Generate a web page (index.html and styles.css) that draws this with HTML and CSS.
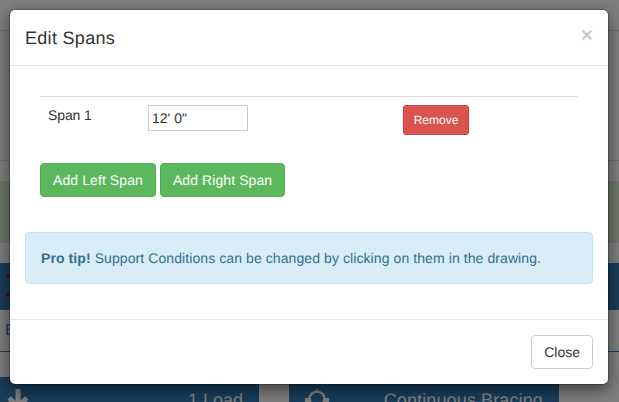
FILE: index.html
```html
<!DOCTYPE html>
<html lang="en">
<head>
<meta charset="utf-8">
<title>Edit Spans</title>
<link rel="stylesheet" href="styles.css">
</head>
<body>
<div class="page">
  <div class="page-top"></div>
  <div class="page-green"></div>
  <div class="page-bar">
    <i class="dash"></i>
    <i class="dash"></i>
  </div>
  <div class="page-tab"><span>B</span></div>
  <div class="page-tiles">
    <div class="tile tile-load">
      <svg class="tile-icon" width="24" height="20" viewBox="0 0 24 20"><path d="M12 0v18M3 9l9 8 9-8" fill="none" stroke="#fff" stroke-width="5"/></svg>
      <span>1 Load</span>
    </div>
    <div class="tile tile-brace">
      <svg class="tile-icon" width="24" height="20" viewBox="0 0 24 20"><circle cx="12" cy="10" r="7.5" fill="none" stroke="#fff" stroke-width="2.5"/><path d="M12 0l3.5 4h-7z" fill="#fff"/><rect x="0" y="9" width="6" height="9" fill="#fff"/><rect x="18" y="9" width="6" height="9" fill="#fff"/></svg>
      <span>Continuous Bracing</span>
    </div>
  </div>
</div>
<div class="backdrop"></div>
<div class="modal">
  <header class="modal-header">
    <h4 class="modal-title">Edit Spans</h4>
    <span class="modal-close">×</span>
  </header>
  <div class="modal-body">
    <div class="span-row">
      <span class="span-label">Span 1</span>
      <input class="span-input" type="text" value="12' 0&quot;">
      <button class="btn btn-danger" type="button">Remove</button>
    </div>
    <div class="span-actions">
      <button class="btn btn-success" type="button">Add Left Span</button>
      <button class="btn btn-success" type="button">Add Right Span</button>
    </div>
    <div class="alert"><strong>Pro tip!</strong> Support Conditions can be changed by clicking on them in the drawing.</div>
  </div>
  <footer class="modal-footer">
    <button class="btn btn-default" type="button">Close</button>
  </footer>
</div>
</body>
</html>
```
FILE: styles.css
```css
* { box-sizing: border-box; }
html, body { margin: 0; height: 100%; overflow: hidden; }
body {
  position: relative;
  background: #fff;
  font-family: "Liberation Sans", Arial, sans-serif;
  font-size: 14px;
  line-height: 20px;
  color: #333;
  text-rendering: geometricPrecision;
}
.page { width: 619px; height: 402px; overflow: hidden; }
.page-top { height: 131px; margin-top: 30px; border-top: 1px solid #ddd; border-bottom: 1px solid #ddd; }
.page-green { height: 62px; margin-top: 20px; background: #dff0d8; }
.page-bar {
  height: 47px;
  margin-top: 20px;
  padding: 12px 6px;
  background: #337ab7;
  display: flex;
  flex-direction: column;
  gap: 15px;
}
.dash { display: block; width: 5px; height: 3px; background: #d00010; }
.page-tab { height: 42px; border-bottom: 1px solid #337ab7; padding: 11px 5px; color: #337ab7; font-size: 16px; }
.page-tiles { display: flex; gap: 30px; margin-top: 25px; }
.tile {
  height: 40px;
  background: #337ab7;
  color: #fff;
  font-size: 18px;
  display: flex;
  justify-content: space-between;
  padding: 13px 16px 0 6px;
}
.tile-load { width: 259px; }
.tile-brace { width: 270px; padding-left: 16px; letter-spacing: .12px; }
.tile-icon { flex: none; margin-top: -1px; }
.backdrop { position: absolute; inset: 0; background: rgba(0, 0, 0, .5); }
.modal {
  position: absolute;
  left: 9px;
  top: 9px;
  width: 600px;
  height: 376px;
  background: #fff;
  background-clip: padding-box;
  border: 1px solid rgba(0, 0, 0, .2);
  border-radius: 6px;
  box-shadow: 0 5px 15px rgba(0, 0, 0, .5);
  display: flex;
  flex-direction: column;
}
.modal-header {
  display: flex;
  justify-content: space-between;
  align-items: flex-start;
  padding: 16px 15px 14px;
  border-bottom: 1px solid #e5e5e5;
}
.modal-title { margin: 0; font-size: 18px; font-weight: 500; line-height: 25px; letter-spacing: .3px; color: #333; }
.modal-close { font-size: 21px; font-weight: 700; line-height: 21px; color: #000; opacity: .2; margin-top: -1px; }
.modal-body { flex: 1; padding: 30px 15px 0; }
.span-row {
  display: grid;
  grid-template-columns: 100px 255px auto;
  justify-content: start;
  align-items: start;
  margin: 0 15px 20px;
  padding: 8px;
  border-top: 1px solid #ddd;
}
.span-label { letter-spacing: -.1px; }
.span-input {
  width: 100px;
  height: 26px;
  padding: 1px 3px;
  border: 1px solid #ccc;
  font: 14px "Liberation Sans", Arial, sans-serif;
  color: #333;
  text-rendering: geometricPrecision;
}
.btn {
  display: inline-block;
  height: 34px;
  padding: 6px 12px;
  border: 1px solid transparent;
  border-radius: 4px;
  font: 14px/20px "Liberation Sans", Arial, sans-serif;
  text-rendering: geometricPrecision;
}
.btn-danger {
  width: 66px;
  height: 30px;
  padding: 5px 0;
  font-size: 12px;
  line-height: 18px;
  border-radius: 3px;
  background: #d9534f;
  border-color: #d43f3a;
  color: #fff;
}
.span-actions { display: flex; gap: 4px; margin: 0 15px 35px; }
.btn-success { background: #5cb85c; border-color: #4cae4c; color: #fff; letter-spacing: .09px; }
.btn-default { background: #fff; border-color: #ccc; color: #333; }
.alert {
  height: 52px;
  padding: 15px;
  background: #d9edf7;
  border: 1px solid #bce8f1;
  border-radius: 4px;
  color: #31708f;
  letter-spacing: .085px;
}
.modal-footer {
  display: flex;
  justify-content: flex-end;
  padding: 15px;
  border-top: 1px solid #e5e5e5;
}
```
